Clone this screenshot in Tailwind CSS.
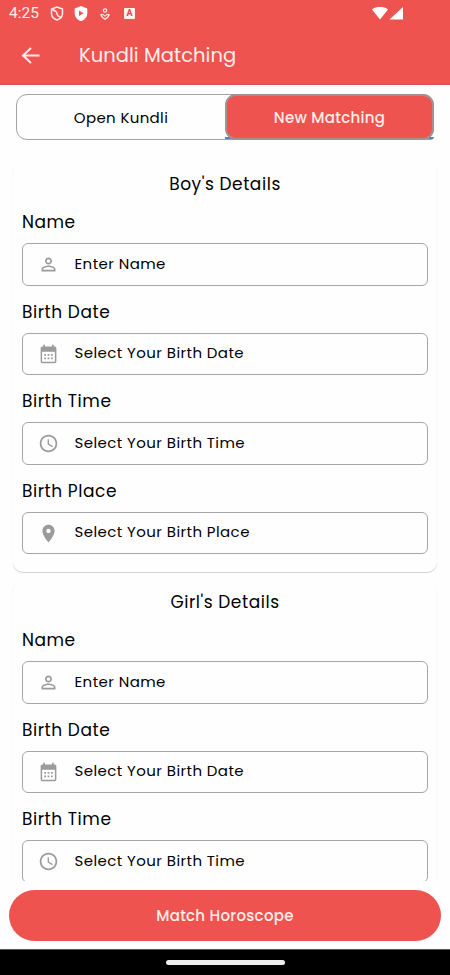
<!DOCTYPE html>
<html lang="en">
<head>
<meta charset="utf-8">
<title>Kundli Matching</title>
<script src="https://cdn.jsdelivr.net/npm/@tailwindcss/browser@4"></script>
</head>
<body class="bg-[#fefefe]">
<svg class="hidden">
  <symbol id="person" viewBox="0 0 24 24"><path d="M12 5.900a2.100 2.100 0 1 1 0 4.200 2.100 2.100 0 0 1 0-4.200m0 9c2.970 0 6.100 1.460 6.100 2.100v1.100H5.900V17c0-.64 3.130-2.100 6.100-2.100M12 4C9.790 4 8 5.790 8 8s1.790 4 4 4 4-1.790 4-4-1.790-4-4-4zm0 9c-2.670 0-8 1.340-8 4v3h16v-3c0-2.660-5.330-4-8-4z"/></symbol>
  <symbol id="calendar" viewBox="0 0 24 24"><path fill-rule="evenodd" d="M6 4V2h2v2h8V2h2v2h1c1.100 0 2 .9 2 2v15c0 1.100-.9 2-2 2H5c-1.100 0-2-.9-2-2V6c0-1.100.9-2 2-2zM4.700 10v11.300h14.600V10zM7.200 12.500h2v2h-2zm3.800 0h2v2h-2zm3.800 0h2v2h-2zM7.200 16.500h2v2h-2zm3.800 0h2v2h-2zm3.800 0h2v2h-2z"/></symbol>
  <symbol id="clock" viewBox="0 0 24 24"><path d="M11.990 2C6.470 2 2 6.480 2 12s4.470 10 9.990 10C17.520 22 22 17.520 22 12S17.520 2 11.990 2zM12 20c-4.420 0-8-3.580-8-8s3.580-8 8-8 8 3.580 8 8-3.580 8-8 8zm.5-13H11v6l5.250 3.150.75-1.230-4.500-2.670z"/></symbol>
  <symbol id="pin" viewBox="0 0 24 24"><path d="M12 2C8.130 2 5 5.130 5 9c0 5.250 7 13 7 13s7-7.750 7-13c0-3.870-3.130-7-7-7zm0 9.500a2.500 2.500 0 0 1 0-5 2.500 2.500 0 0 1 0 5z"/></symbol>
</svg>
<div class="flex h-[975px] w-[450px] flex-col overflow-hidden bg-[#fefefe] font-['Poppins','Inter',sans-serif] text-black">
  <header class="h-[85px] shrink-0 border-b border-[#d9504f] bg-[#ef5350] text-[#ffeeea]">
    <div class="flex h-[27px] items-center pl-[9px]">
      <span class="w-[41px] font-['Roboto',sans-serif] text-[15.500px] leading-[27px]">4:25</span>
      <svg class="h-[15px] w-[14px]" viewBox="0 0 14 15" fill="none" stroke="currentColor" stroke-width="1.500"><path d="M7 1 1.500 3v4.500C1.500 10.500 4 13 7 14c3-1 5.500-3.500 5.500-6.500V3zM2.500 3.500 6 5.500c1.500 1 .5 3 2 4.200l2.500 1.800"/></svg>
      <svg class="ml-[10px] h-[15px] w-[14px] text-white" viewBox="0 0 14 15"><path fill="currentColor" fill-rule="evenodd" d="M7 0 .7 2.400v5C.7 11 3.500 14 7 15c3.500-1 6.300-4 6.300-7.600v-5zM5 4.500v5.500l4.500-2.750z"/></svg>
      <svg class="ml-[12px] h-[12px] w-[10px]" viewBox="0 0 10 12" fill="none" stroke="currentColor" stroke-width="1.200"><circle cx="5" cy="2.500" r="1.700"/><path d="M1 6.500c1.500-.5 2.500.2 4 1.500 1.500-1.300 2.500-2 4-1.500C9.200 8.500 7 10 5 11.200 3 10 .8 8.500 1 6.500z"/></svg>
      <span class="ml-[14px] flex h-[11px] w-[11px] items-center justify-center rounded-[1px] bg-[#fff3f0] font-['Roboto',sans-serif] text-[9px] font-bold leading-none text-[#d84a48]">A</span>
      <svg class="ml-[237px] h-[14px] w-[32px] text-white" viewBox="0 0 32 14" fill="currentColor"><path d="M0 2.500C4.500-1 11.500-1 16 2.500L8 12.500zM17.500 12.500 31 0V12.500z"/></svg>
    </div>
    <div class="flex h-[57px] items-center pl-[21px]">
      <svg class="h-[18px] w-[20px]" viewBox="0 0 20 18" fill="none" stroke="currentColor" stroke-width="2"><path d="M18.500 8.500H2.500M10 1 2 8.500l8 7.500"/></svg>
      <h1 class="ml-[38px] pt-px text-[19.500px] leading-7 tracking-[0.050px]">Kundli Matching</h1>
    </div>
  </header>

  <nav class="mx-4 mt-[9px] flex h-[46px] shrink-0 rounded-[11px] border border-[#a3a3a3] text-[15px] tracking-[0.350px]">
    <div class="flex w-[208px] items-center justify-center pt-[2px]">Open Kundli</div>
    <div class="-my-px -mr-px flex-1 rounded-br-[4px] bg-[linear-gradient(to_top,#a3a3a3_1px,#4a83cf_1px,#4a83cf_3px,transparent_3px)]">
      <div class="flex h-full items-center justify-center rounded-[11px] border-2 border-[#a58f90] bg-[#ef5350] pt-[2px] font-medium tracking-[0.280px] text-[#ffeeea]">New Matching</div>
    </div>
  </nav>

  <main class="mt-[23px] h-[718px] shrink-0 overflow-hidden px-[13px]">
    <section class="mb-[9px] h-[409px] rounded-[10px] px-[9px] pt-2 shadow-[0_1px_1px_rgba(0,0,0,0.18)]" data-details="Boy's Details"></section>
    <section class="h-[409px] rounded-[10px] px-[9px] pt-2 shadow-[0_1px_1px_rgba(0,0,0,0.18)]" data-details="Girl's Details"></section>
  </main>

  <div class="h-[68px] shrink-0 px-[9px] pt-[9px]">
    <button class="block h-[50.500px] w-full rounded-full bg-[#ef5350] pt-px text-[15px] font-medium tracking-[0.300px] text-[#ffeeea]">Match Horoscope</button>
  </div>
  <footer class="flex flex-1 justify-center border-t border-[#555] bg-black pt-[10px]">
    <div class="h-[5px] w-[119px] rounded-full bg-[#eee]"></div>
  </footer>
</div>
<script>
  const fields = [
    ['Name', 'Enter Name', 'person'],
    ['Birth Date', 'Select Your Birth Date', 'calendar'],
    ['Birth Time', 'Select Your Birth Time', 'clock'],
    ['Birth Place', 'Select Your Birth Place', 'pin'],
  ];
  document.querySelectorAll('[data-details]').forEach(card => {
    card.innerHTML = `<h2 class="h-[25px] text-center text-[17px] leading-[26px] tracking-[0.550px]">${card.dataset.details}</h2>` +
      fields.map(([label, hint, icon]) => `
        <div class="h-[89.600px] pt-[13px]">
          <label class="block h-[34px] text-[17px] leading-[27px] tracking-[0.550px]">${label}</label>
          <div class="flex h-[42.600px] items-center rounded-[6px] border border-[#a6a6a6] pl-[14.500px]">
            <svg class="h-[21px] w-[21px] fill-[#9b9b9b]"><use href="#${icon}"/></svg>
            <span class="ml-[16px] pb-[1.500px] text-[15px] leading-5 tracking-[0.420px]">${hint}</span>
          </div>
        </div>`).join('');
  });
</script>
</body>
</html>
